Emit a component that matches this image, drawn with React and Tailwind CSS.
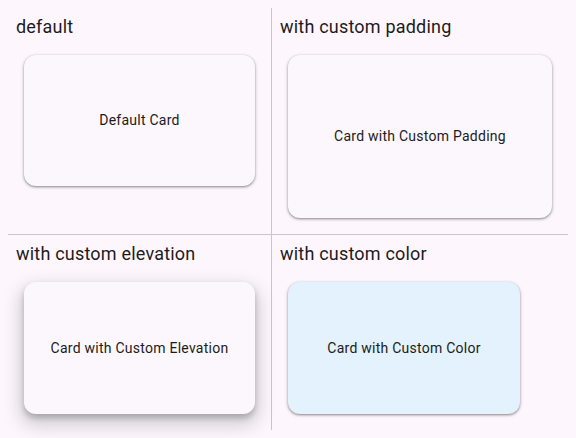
import React from 'react';

const font = { fontFamily: 'Roboto, "Noto Sans", sans-serif' };

const Cell = ({ title, className = '', children }) => (
  <div className={`p-2 flex flex-col ${className}`}>
    <div className="text-[18px] leading-[21px] tracking-[0.2px] text-[#1d1b20] mb-[10px] whitespace-nowrap">{title}</div>
    {children}
  </div>
);

const Card = ({ className = '', children }) => (
  <div className={`m-2 rounded-xl flex items-center justify-center text-[14px] text-[#1d1b20] tracking-[0.25px] ${className}`}>
    {children}
  </div>
);

export default function App() {
  return (
    <div className="w-[576px] h-[438px] bg-[#fdf7fd] p-2 overflow-hidden" style={font}>
      <div className="grid grid-cols-[264px_296px]">
        <Cell title="default" className="border-r border-b border-[#cac4d0]">
          <Card className="h-[131px] bg-[#fcf7fc] shadow-[0_1px_3px_1px_rgba(0,0,0,0.15),0_1px_2px_rgba(0,0,0,0.3)]">
            Default Card
          </Card>
        </Cell>
        <Cell title="with custom padding" className="border-b border-[#cac4d0]">
          <Card className="h-[163px] bg-[#fcf7fc] shadow-[0_1px_3px_1px_rgba(0,0,0,0.15),0_1px_2px_rgba(0,0,0,0.3)]">
            Card with Custom Padding
          </Card>
        </Cell>
        <Cell title="with custom elevation" className="border-r border-[#cac4d0]">
          <Card className="h-[132px] bg-[#fcf7fc] shadow-[0_8px_18px_4px_rgba(0,0,0,0.16),0_4px_6px_rgba(0,0,0,0.22)]">
            Card with Custom Elevation
          </Card>
        </Cell>
        <Cell title="with custom color">
          <Card className="w-[232px] h-[132px] bg-[#e3f2fd] shadow-[0_1px_3px_1px_rgba(0,0,0,0.15),0_1px_2px_rgba(0,0,0,0.3)]">
            Card with Custom Color
          </Card>
        </Cell>
      </div>
    </div>
  );
}
